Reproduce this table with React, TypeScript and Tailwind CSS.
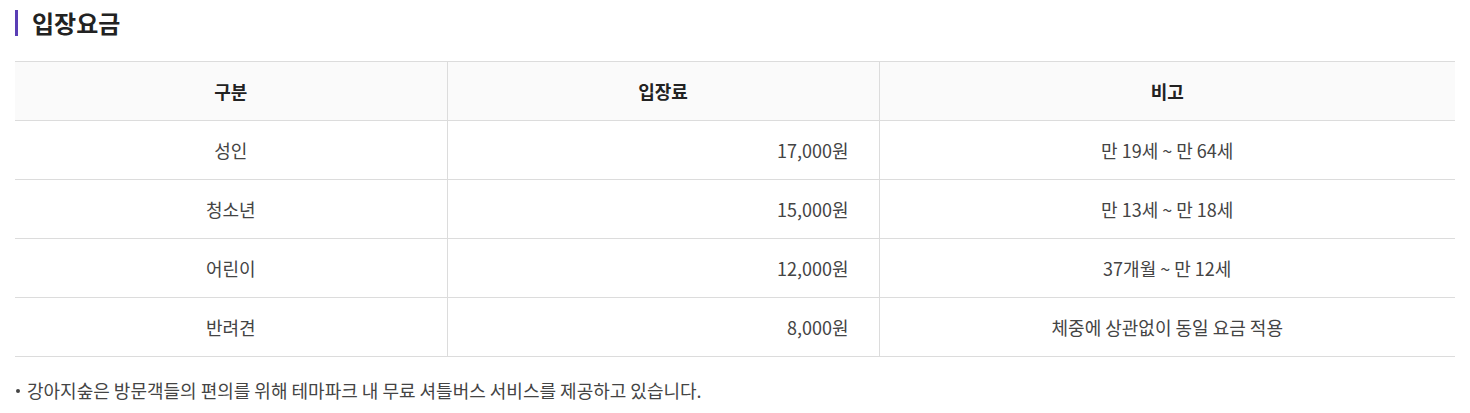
import React from 'react';

interface FeeRow {
  label: string;
  price: string;
  note: string;
}

const rows: FeeRow[] = [
  { label: '성인', price: '17,000원', note: '만 19세 ~ 만 64세' },
  { label: '청소년', price: '15,000원', note: '만 13세 ~ 만 18세' },
  { label: '어린이', price: '12,000원', note: '37개월 ~ 만 12세' },
  { label: '반려견', price: '8,000원', note: '체중에 상관없이 동일 요금 적용' },
];

const App: React.FC = () => {
  return (
    <div className="w-[1470px] h-[413px] bg-white px-[15px] font-['Noto_Sans_CJK_KR','Noto_Sans',sans-serif]">
      <div className="flex items-center h-[46px]">
        <div className="w-[3px] h-[26px] bg-[#5a3eb5] mr-[14px]"></div>
        <h2 className="text-[24px] font-bold text-[#222] leading-none">입장요금</h2>
      </div>

      <table className="w-full mt-[15px] border-collapse table-fixed text-[18px] text-[#444]">
        <colgroup>
          <col className="w-[432px]" />
          <col className="w-[432px]" />
          <col />
        </colgroup>
        <thead>
          <tr className="h-[59px] bg-[#fafafa] border-t border-b border-[#dcdcdc]">
            <th className="font-bold text-[#222] text-center">구분</th>
            <th className="font-bold text-[#222] text-center border-l border-[#dcdcdc]">입장료</th>
            <th className="font-bold text-[#222] text-center border-l border-[#dcdcdc]">비고</th>
          </tr>
        </thead>
        <tbody>
          {rows.map((row) => (
            <tr key={row.label} className="h-[59px] border-b border-[#dcdcdc]">
              <td className="text-center">{row.label}</td>
              <td className="text-right pr-[30px] border-l border-[#dcdcdc]">{row.price}</td>
              <td className="text-center border-l border-[#dcdcdc]">{row.note}</td>
            </tr>
          ))}
        </tbody>
      </table>

      <p className="mt-[20px] flex items-center text-[18px] text-[#444] pl-[1px]">
        <span className="w-[4px] h-[4px] rounded-full bg-[#444] mr-[7px]"></span>
        강아지숲은 방문객들의 편의를 위해 테마파크 내 무료 셔틀버스 서비스를 제공하고 있습니다.
      </p>
    </div>
  );
};

export default App;
